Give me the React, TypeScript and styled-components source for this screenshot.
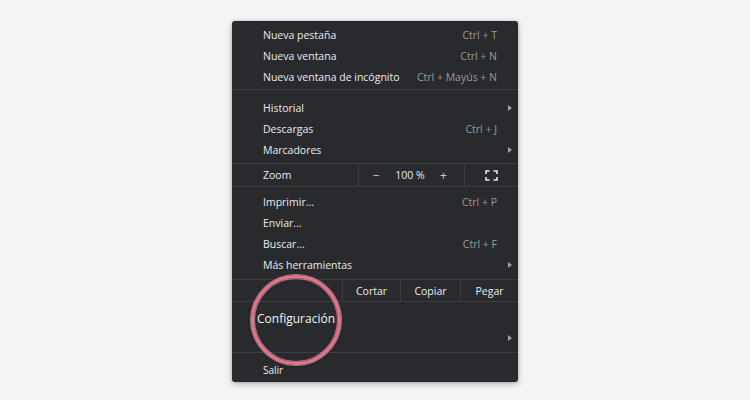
import React from "react";
import styled, { createGlobalStyle } from "styled-components";

const Global = createGlobalStyle`
  html, body { margin: 0; padding: 0; background: #f4f4f4; }
  body { font-family: "Open Sans", "Noto Sans", sans-serif; }
`;

const Page = styled.div`
  width: 750px;
  height: 400px;
  display: flex;
  justify-content: center;
  padding-top: 21px;
  box-sizing: border-box;
`;

const Menu = styled.div`
  width: 286px;
  height: 361px;
  background: #292a2d;
  border-radius: 3px;
  box-shadow: 0 2px 6px rgba(0, 0, 0, 0.28), 0 0 2px rgba(0, 0, 0, 0.2);
  padding-top: 3px;
  box-sizing: border-box;
  display: flex;
  flex-direction: column;
  color: #e8eaed;
  font-size: 10.5px;
`;

const Row = styled.div<{ $arrow?: boolean }>`
  height: 21px;
  display: flex;
  align-items: center;
  justify-content: space-between;
  padding-left: 31px;
  padding-right: ${(p) => (p.$arrow ? "6px" : "21px")};
  flex-shrink: 0;
`;

const Label = styled.span`
  color: #e8eaed;
  white-space: nowrap;
`;

const Shortcut = styled.span`
  color: #9a9ca0;
  white-space: nowrap;
`;

const Arrow = styled.span`
  width: 0;
  height: 0;
  border-top: 3.5px solid transparent;
  border-bottom: 3.5px solid transparent;
  border-left: 4px solid #9aa0a6;
`;

const Sep = styled.div<{ $top?: number; $bottom?: number }>`
  height: 1px;
  background: #3c3d41;
  margin-top: ${(p) => p.$top ?? 0}px;
  margin-bottom: ${(p) => p.$bottom ?? 0}px;
  flex-shrink: 0;
`;

const SplitRow = styled.div<{ $h: number }>`
  height: ${(p) => p.$h}px;
  display: flex;
  align-items: stretch;
  flex-shrink: 0;
`;

const Cell = styled.div<{ $w: number; $left?: boolean; $border?: boolean }>`
  width: ${(p) => p.$w}px;
  display: flex;
  align-items: center;
  justify-content: ${(p) => (p.$left ? "flex-start" : "center")};
  padding-left: ${(p) => (p.$left ? "31px" : "0")};
  box-sizing: border-box;
  border-left: ${(p) => (p.$border ? "1px solid #3c3d41" : "none")};
  color: #e8eaed;
`;

const ZoomControls = styled.div`
  display: flex;
  align-items: center;
  width: 100%;
  justify-content: space-between;
  padding: 0 17px 0 14px;
  box-sizing: border-box;
`;

const ZoomBtn = styled.span`
  color: #c8cacd;
  font-size: 12px;
`;

const ConfigSection = styled.div`
  position: relative;
  height: 50px;
  flex-shrink: 0;
  display: flex;
  flex-direction: column;
  padding-left: 25px;
  padding-right: 6px;
`;

const ConfigLabel = styled.span`
  font-size: 12px;
  color: #f4f4f4;
  margin-top: 7px;
  line-height: 20px;
  position: relative;
  z-index: 2;
`;

const ConfigArrowWrap = styled.div`
  display: flex;
  justify-content: flex-end;
  margin-top: 6px;
`;

const Highlight = styled.div`
  position: absolute;
  left: 19px;
  top: -27px;
  width: 84px;
  height: 84px;
  border-radius: 50%;
  border: 3px solid #ea7189;
  box-shadow: 0 0 0 1px rgba(250, 200, 210, 0.55), 0 1px 3px rgba(0, 0, 0, 0.3),
    inset 0 0 0 1px rgba(255, 185, 200, 0.6);
  z-index: 3;
  pointer-events: none;
`;

const SalirRow = styled(Row)`
  margin-top: 6px;
  font-size: 10px;
`;

const FullIcon = () => (
  <svg width="13" height="11" viewBox="0 0 13 11">
    <g fill="none" stroke="#e8eaed" strokeWidth="1.6">
      <path d="M1 4V1h3.5" />
      <path d="M8.5 1H12v3" />
      <path d="M12 7v3H8.5" />
      <path d="M4.5 10H1V7" />
    </g>
  </svg>
);

export default function App() {
  return (
    <>
      <Global />
      <Page>
        <Menu>
          <Row>
            <Label>Nueva pestaña</Label>
            <Shortcut>Ctrl + T</Shortcut>
          </Row>
          <Row>
            <Label>Nueva ventana</Label>
            <Shortcut>Ctrl + N</Shortcut>
          </Row>
          <Row>
            <Label>Nueva ventana de incógnito</Label>
            <Shortcut>Ctrl + Mayús + N</Shortcut>
          </Row>
          <Sep $top={2} $bottom={7} />
          <Row $arrow>
            <Label>Historial</Label>
            <Arrow />
          </Row>
          <Row>
            <Label>Descargas</Label>
            <Shortcut>Ctrl + J</Shortcut>
          </Row>
          <Row $arrow>
            <Label>Marcadores</Label>
            <Arrow />
          </Row>
          <Sep $top={3} />
          <SplitRow $h={22}>
            <Cell $w={126} $left>
              Zoom
            </Cell>
            <Cell $w={106} $border>
              <ZoomControls>
                <ZoomBtn>−</ZoomBtn>
                <Label>100 %</Label>
                <ZoomBtn>+</ZoomBtn>
              </ZoomControls>
            </Cell>
            <Cell $w={54} $border>
              <FullIcon />
            </Cell>
          </SplitRow>
          <Sep $bottom={4} />
          <Row>
            <Label>Imprimir...</Label>
            <Shortcut>Ctrl + P</Shortcut>
          </Row>
          <Row>
            <Label>Enviar...</Label>
          </Row>
          <Row>
            <Label>Buscar...</Label>
            <Shortcut>Ctrl + F</Shortcut>
          </Row>
          <Row $arrow>
            <Label>Más herramientas</Label>
            <Arrow />
          </Row>
          <Sep $top={4} />
          <SplitRow $h={21}>
            <Cell $w={110} $left />
            <Cell $w={58} $border>
              Cortar
            </Cell>
            <Cell $w={60} $border>
              Copiar
            </Cell>
            <Cell $w={58} $border>
              Pegar
            </Cell>
          </SplitRow>
          <Sep />
          <ConfigSection>
            <ConfigLabel>Configuración</ConfigLabel>
            <ConfigArrowWrap>
              <Arrow />
            </ConfigArrowWrap>
            <Highlight />
          </ConfigSection>
          <Sep />
          <SalirRow>
            <Label>Salir</Label>
          </SalirRow>
        </Menu>
      </Page>
    </>
  );
}
